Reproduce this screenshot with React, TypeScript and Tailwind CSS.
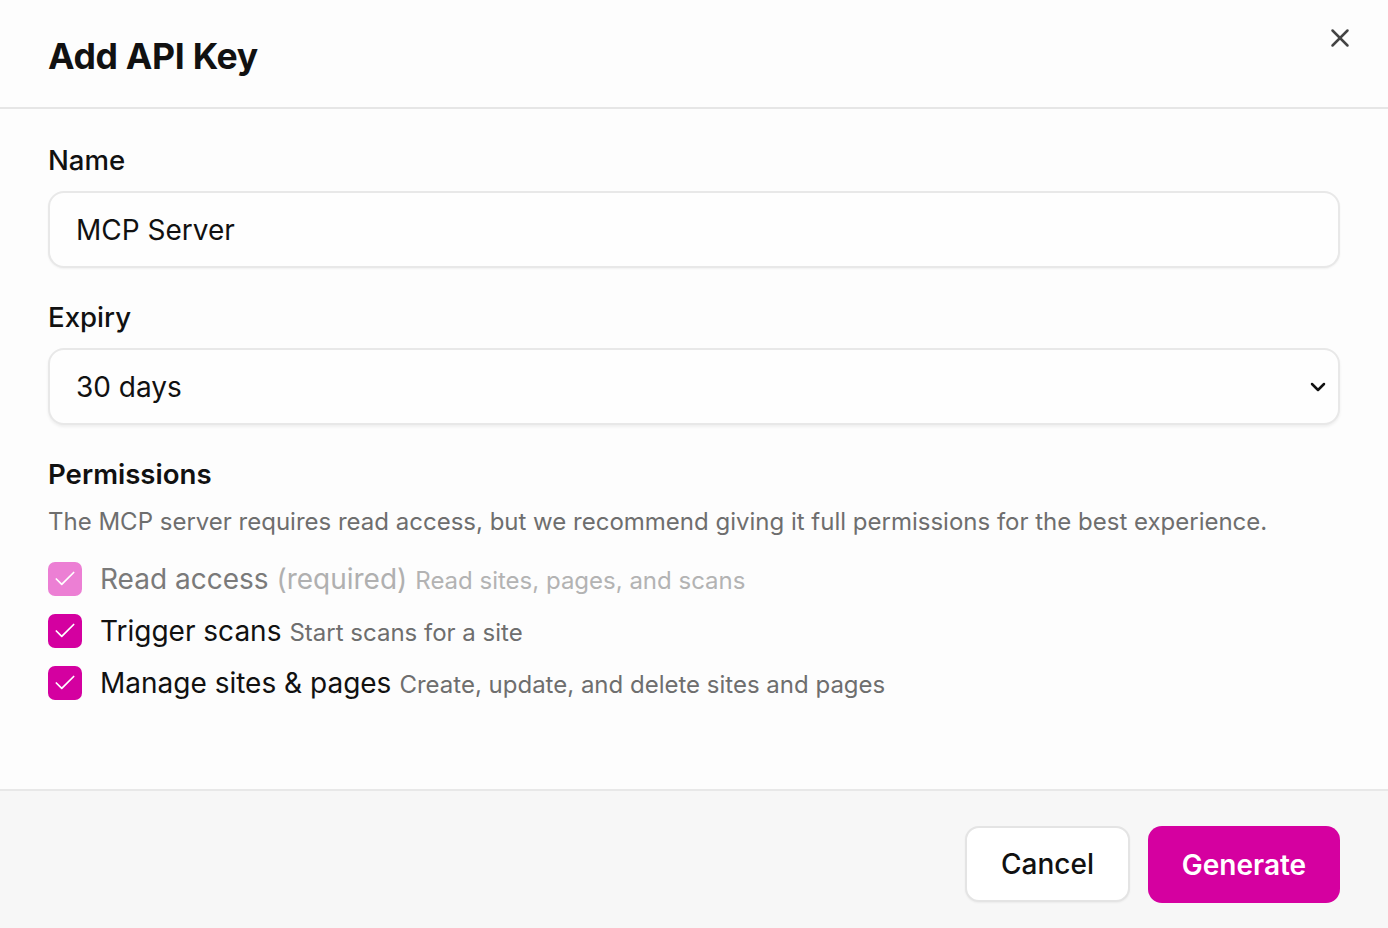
import { X, ChevronDown, Check } from "lucide-react";

const perms = [
  { label: "Read access", extra: "(required)", desc: "Read sites, pages, and scans", locked: true },
  { label: "Trigger scans", desc: "Start scans for a site" },
  { label: "Manage sites & pages", desc: "Create, update, and delete sites and pages" },
];

export default function App() {
  return (
    <div
      className="w-[1388px] h-[928px] bg-[#fdfdfd] flex flex-col text-[#111]"
      style={{ fontFamily: "Inter, 'Liberation Sans', sans-serif" }}
    >
      <div className="h-[109px] shrink-0 border-b-2 border-[#e6e6e6] flex items-start justify-between pl-12 pr-8">
        <h1 className="mt-[35px] text-[35.6px] font-bold tracking-[-0.3px] leading-[44px]">Add API Key</h1>
        <button type="button" className="mt-[23px] mr-[1px] text-[#444]">
          <X className="w-[30px] h-[30px]" strokeWidth={2} />
        </button>
      </div>

      <div className="flex-1 px-12 pt-[34px]">
        <label className="block text-[27.6px] font-medium leading-[34px]">Name</label>
        <div className="mt-[14px] h-[77px] rounded-[16px] border-2 border-[#e8e8e8] bg-[#fefefe] flex items-center px-[26px] shadow-[0_1px_2px_rgba(0,0,0,0.05)]">
          <span className="text-[28px]">MCP Server</span>
        </div>

        <label className="block mt-[32px] text-[27.6px] font-medium leading-[34px]">Expiry</label>
        <div className="mt-[14px] h-[77px] rounded-[16px] border-2 border-[#e8e8e8] bg-[#fefefe] flex items-center justify-between pl-[26px] pr-[8px] shadow-[0_2px_3px_rgba(0,0,0,0.06)]">
          <span className="text-[28px]">30 days</span>
          <ChevronDown className="w-[24px] h-[24px] text-[#111]" strokeWidth={2.5} />
        </div>

        <h2 className="mt-[32px] text-[27.6px] font-semibold leading-[34px]">Permissions</h2>
        <p className="mt-[16px] text-[24px] text-[#6e6e6e] leading-[30px]">
          The MCP server requires read access, but we recommend giving it full permissions for the best experience.
        </p>

        <div className="mt-[25px] flex flex-col gap-[18px]">
          {perms.map((p) => (
            <div key={p.label} className="flex items-center gap-[18px] h-[34px]">
              <span
                className={
                  p.locked
                    ? "w-[34px] h-[34px] rounded-[7px] bg-[#ec7fd4] flex items-center justify-center"
                    : "w-[34px] h-[34px] rounded-[7px] bg-[#d400a0] flex items-center justify-center"
                }
              >
                <Check className="w-[26px] h-[26px] text-white" strokeWidth={1.6} />
              </span>
              <span className="flex items-baseline gap-[8px]">
                <span className={p.locked ? "text-[28px] text-[#7a7a7a]" : "text-[28px] text-[#111]"}>
                  {p.label}
                  {p.extra && <span className="text-[#b0b0b0]"> {p.extra}</span>}
                </span>
                <span className={p.locked ? "text-[24px] text-[#b3b3b3]" : "text-[24px] text-[#6e6e6e]"}>
                  {p.desc}
                </span>
              </span>
            </div>
          ))}
        </div>
      </div>

      <div className="h-[139px] shrink-0 border-t-2 border-[#e8e8e8] bg-[#f7f7f7] flex items-start justify-end gap-[18px] pr-12 pt-[35px]">
        <button
          type="button"
          className="w-[165px] h-[76px] rounded-[14px] border-2 border-[#e4e4e4] bg-white text-[28px] font-medium text-[#111] shadow-[0_1px_2px_rgba(0,0,0,0.05)]"
        >
          Cancel
        </button>
        <button
          type="button"
          className="w-[192px] h-[77px] rounded-[14px] bg-[#d500a0] text-[28px] font-semibold text-white"
        >
          Generate
        </button>
      </div>
    </div>
  );
}
